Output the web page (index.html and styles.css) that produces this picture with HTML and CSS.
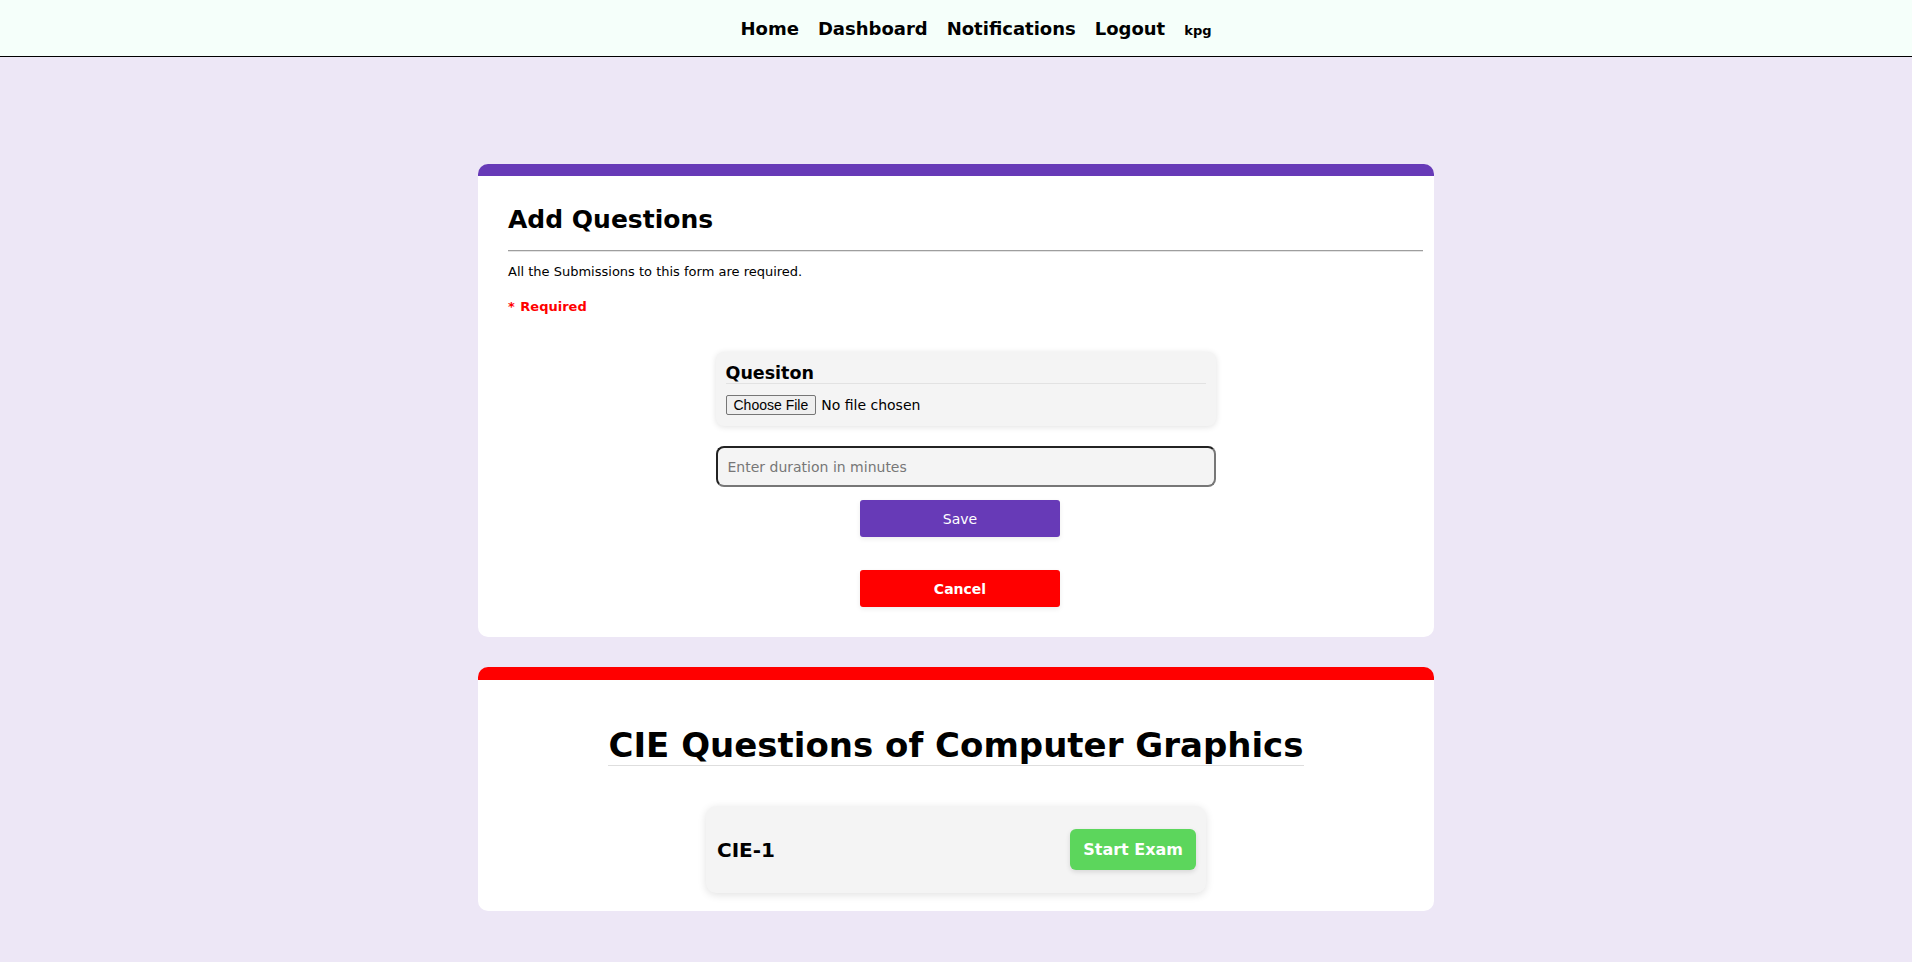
FILE: index.html
```html
<!DOCTYPE html>
<html lang="en">
<head>
<meta charset="utf-8">
<title>Add Questions</title>
<link rel="stylesheet" href="styles.css">
</head>
<body>
<nav class="navbar">
  <ul class="nav-list">
    <li><a href="#" class="nav-link">Home</a></li>
    <li><a href="#" class="nav-link">Dashboard</a></li>
    <li><a href="#" class="nav-link">Notifications</a></li>
    <li><a href="#" class="nav-link">Logout</a></li>
    <li class="nav-user">kpg</li>
  </ul>
</nav>
<main class="page">
  <section class="card card-purple">
    <h2 class="card-title">Add Questions</h2>
    <div class="rule"></div>
    <p class="note">All the Submissions to this form are required.</p>
    <p class="required">* Required</p>
    <form class="qform">
      <div class="qbox">
        <h3 class="qbox-title">Quesiton</h3>
        <input type="file" class="file-input">
      </div>
      <input type="text" class="duration" placeholder="Enter duration in minutes">
      <div class="btn-col">
        <button type="button" class="btn btn-save">Save</button>
        <button type="button" class="btn btn-cancel">Cancel</button>
      </div>
    </form>
  </section>
  <section class="card card-red">
    <h1 class="exam-title">CIE Questions of Computer Graphics</h1>
    <div class="exam-row">
      <span class="exam-name">CIE-1</span>
      <button type="button" class="btn-start">Start Exam</button>
    </div>
  </section>
</main>
</body>
</html>
```

FILE: styles.css
```css
* { box-sizing: border-box; }

html, body {
  margin: 0;
  padding: 0;
}

body {
  background: #ede7f6;
  font-family: "DejaVu Sans", Verdana, sans-serif;
  color: #000;
  min-height: 100vh;
}

.navbar {
  background: #f5fffa;
  height: 57px;
  border-bottom: 1px solid #000;
  display: flex;
  justify-content: center;
  align-items: center;
}

.nav-list {
  list-style: none;
  margin: 0;
  padding: 0 0 0 40px;
  display: flex;
  align-items: baseline;
  gap: 19px;
}

.nav-link {
  color: #000;
  text-decoration: none;
  font-weight: bold;
  font-size: 18px;
}

.nav-user {
  font-weight: bold;
  font-size: 13px;
}

.page {
  padding: 107px 0 40px;
}

.card {
  width: 50%;
  margin: 0 auto;
  background: #fff;
  border-radius: 10px;
}

.card-purple {
  border-top: 12px solid #673ab7;
  padding: 0 11px 30px 30px;
}

.card-title {
  margin: 29px 0 0;
  font-size: 25px;
  font-weight: bold;
}

.rule {
  margin-top: 16px;
  border-top: 1px solid #9e9e9e;
  border-bottom: 1px solid #e4e4e4;
}

.note {
  margin: 12px 0 0;
  font-size: 13px;
  line-height: 15px;
}

.required {
  margin: 20px 0 0;
  font-size: 13px;
  line-height: 15px;
  font-weight: bold;
  color: #ff0000;
  word-spacing: 1px;
}

.qform {
  margin-top: 38px;
  display: flex;
  flex-direction: column;
  align-items: center;
}

.qbox {
  width: 500px;
  background: #f4f4f4;
  border-radius: 8px;
  padding: 11px 10px 11px;
  box-shadow: 0 1px 6px rgba(0, 0, 0, 0.12);
}

.qbox-title {
  margin: 0;
  font-size: 17.5px;
  font-weight: bold;
  border-bottom: 1px solid #e2e2e2;
}

.file-input {
  display: block;
  margin-top: 11px;
  font-family: "DejaVu Sans", Verdana, sans-serif;
  font-size: 14px;
  color: #000;
}

.file-input::file-selector-button {
  font-family: "Liberation Sans", Arial, sans-serif;
  font-size: 14px;
  padding: 1px 7px;
  margin-right: 5px;
  border: 1px solid #767676;
  border-radius: 2px;
  background: #efefef;
  color: #000;
}

.duration {
  width: 500px;
  height: 41px;
  margin-top: 20px;
  padding: 0 10px;
  border-width: 2px;
  border-style: solid;
  border-color: #222 #777 #777 #222;
  border-radius: 8px;
  background: #f4f4f4;
  font-family: "DejaVu Sans", Verdana, sans-serif;
  font-size: 14px;
}

.duration::placeholder {
  color: #777;
}

.btn-col {
  align-self: stretch;
  padding-right: 11px;
  display: flex;
  flex-direction: column;
  align-items: center;
}

.btn {
  width: 200px;
  height: 37px;
  border: none;
  border-radius: 3px;
  color: #fff;
  font-family: "DejaVu Sans", Verdana, sans-serif;
  font-size: 14px;
  box-shadow: 0 2px 5px rgba(0, 0, 0, 0.08);
}

.btn-save {
  margin-top: 13px;
  background: #673ab7;
}

.btn-cancel {
  margin-top: 33px;
  background: #ff0000;
  font-weight: bold;
}

.card-red {
  margin-top: 30px;
  border-top: 13px solid #ff0000;
  padding: 45px 10px 18px;
  text-align: center;
}

.exam-title {
  display: inline-block;
  margin: 0;
  font-size: 34px;
  font-weight: bold;
  border-bottom: 1px solid #dedede;
}

.exam-row {
  width: 500px;
  margin: 40px auto 0;
  background: #f4f4f4;
  border-radius: 10px;
  padding: 23px 10px 23px 11px;
  display: flex;
  justify-content: space-between;
  align-items: center;
  box-shadow: 0 2px 8px rgba(0, 0, 0, 0.12);
}

.exam-name {
  font-size: 20px;
  font-weight: bold;
}

.btn-start {
  height: 41px;
  padding: 0 13px;
  border: none;
  border-radius: 6px;
  background: #5cd65c;
  color: #fff;
  font-family: "DejaVu Sans", Verdana, sans-serif;
  font-size: 16px;
  font-weight: bold;
  box-shadow: 0 2px 5px rgba(0, 0, 0, 0.12);
}
```
